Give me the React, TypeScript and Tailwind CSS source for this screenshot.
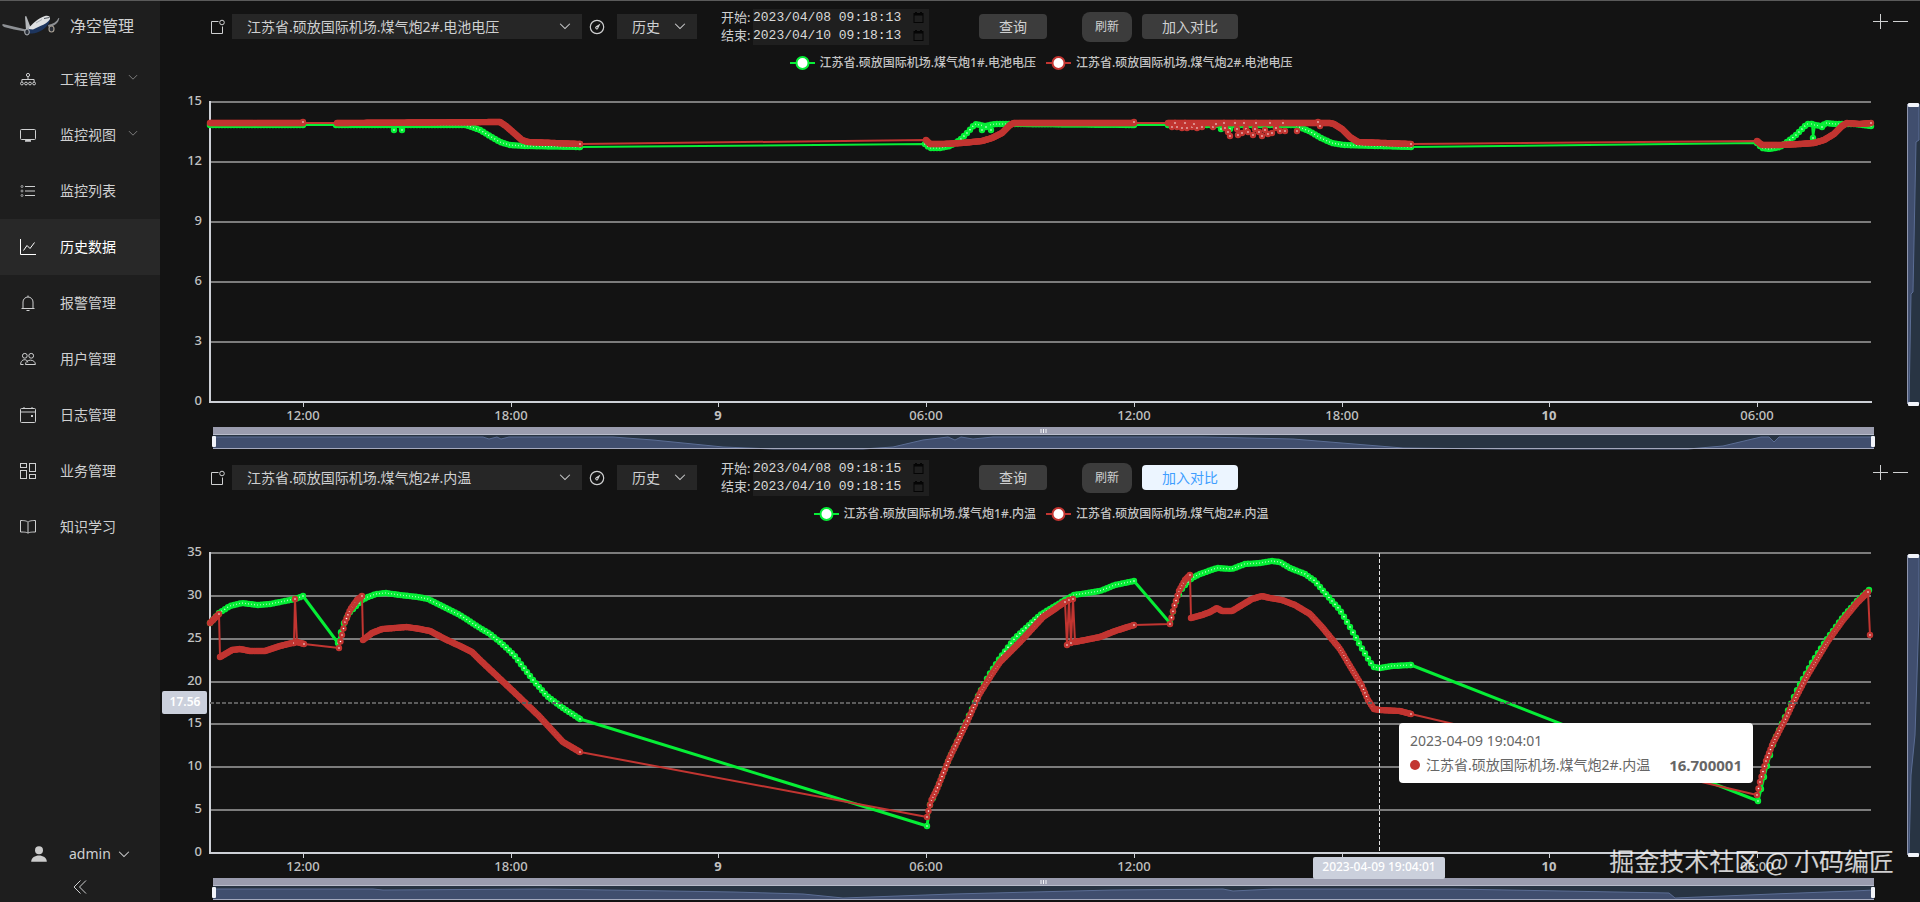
import { useId, useLayoutEffect, useMemo, useRef, useState } from "react";
import type { ReactNode } from "react";

/* ------------------------------------------------------------------ */
/* Trace data, stored in a 1661 x 300 plot space (y grows downwards)   */
/* ------------------------------------------------------------------ */

const SPAN_X = 1661;
const SPAN_Y = 300;

type Pt = [number, number];

interface Series {
  name: string;
  color: string;
  step: number;
  line: number;
  runs: Pt[][];
  scatter?: Pt[];
}

interface ChartData {
  series: Series[];
  max: number;
  interval: number;
  overview: Pt[];
  side: Pt[];
}

const GREEN = "#06ee36";
const RED = "#c23531";

const TICKS: { x: number; label: string; strong?: boolean }[] = [
  { x: 93, label: "12:00" },
  { x: 301, label: "18:00" },
  { x: 508, label: "9", strong: true },
  { x: 716, label: "06:00" },
  { x: 924, label: "12:00" },
  { x: 1132, label: "18:00" },
  { x: 1339, label: "10", strong: true },
  { x: 1547, label: "06:00" },
];

const voltage: ChartData = {
  max: 15,
  interval: 3,
  series: [
    {
      name: "江苏省.硕放国际机场.煤气炮1#.电池电压",
      color: GREEN,
      step: 3,
      line: 2,
      runs: [
        [[0, 23], [93, 23]],
        [
          [126, 23], [255, 23], [262, 25], [270, 28], [280, 34], [290, 40], [300, 43],
          [315, 44], [370, 45],
        ],
        [
          [715, 42], [720, 46], [730, 46], [740, 44], [750, 38], [758, 30], [765, 22],
          [775, 24], [785, 22], [800, 22], [924, 23],
        ],
        [
          [958, 23], [1085, 23], [1092, 26], [1101, 30], [1111, 36], [1122, 41],
          [1134, 43], [1201, 45],
        ],
        [
          [1547, 41], [1552, 46], [1560, 47], [1570, 45], [1577, 40], [1585, 34],
          [1593, 26], [1597, 22], [1602, 22],
        ],
        [[1603, 36]],
        [[1605, 23], [1612, 24], [1616, 21], [1625, 22], [1645, 22], [1661, 24]],
      ],
      scatter: [[184, 28], [192, 28], [772, 28], [781, 28], [776, 25], [1011, 27], [1020, 27], [1612, 25]],
    },
    {
      name: "江苏省.硕放国际机场.煤气炮2#.电池电压",
      color: RED,
      step: 1,
      line: 2,
      runs: [
        [[0, 21], [93, 21]],
        [
          [127, 21], [290, 20], [296, 24], [304, 31], [312, 38], [318, 40], [370, 42],
        ],
        [
          [716, 38], [720, 42], [732, 42], [752, 41], [772, 39], [782, 36], [792, 31],
          [800, 23], [804, 21], [924, 21],
        ],
        [[958, 21], [1000, 21], [1120, 21], [1124, 22], [1132, 27], [1140, 35], [1148, 40], [1201, 42]],
        [
          [1547, 39], [1552, 43], [1570, 43], [1590, 42], [1604, 41], [1614, 38],
          [1624, 32], [1632, 24], [1637, 21], [1650, 22], [1661, 21],
        ],
      ],
      scatter: [
        [962, 25], [967, 25], [972, 26], [977, 26], [982, 25], [987, 26], [992, 25],
        [1003, 25], [1015, 26], [1018, 30], [1020, 34], [1027, 27], [1028, 33], [1032, 31],
        [1036, 27], [1038, 30], [1043, 33], [1045, 27], [1049, 30], [1052, 34], [1055, 28],
        [1058, 32], [1062, 31], [1066, 26], [1070, 29], [1075, 29], [1087, 29], [1110, 24],
        [965, 21], [975, 21], [984, 22], [1006, 22], [1014, 21], [1025, 21], [1034, 21],
        [1046, 21], [1060, 21], [1073, 21], [1108, 20], [93, 20], [370, 42], [924, 20],
      ],
    },
  ],
  overview: [
    [0, 2], [270, 2], [276, 4], [284, 2], [288, 4], [296, 2], [400, 2], [440, 5], [510, 12],
    [560, 14], [650, 14], [680, 12], [710, 5], [735, 2], [742, 5], [748, 2], [760, 4],
    [780, 2], [990, 2], [1080, 4], [1190, 13], [1290, 14], [1475, 14], [1510, 11],
    [1548, 2], [1556, 2], [1561, 7], [1566, 2], [1661, 2],
  ],
  side: [[12, 0], [12, 36], [9, 38], [6, 188], [4, 190], [2, 300]],
};

const temperature: ChartData = {
  max: 35,
  interval: 5,
  series: [
    {
      name: "江苏省.硕放国际机场.煤气炮1#.内温",
      color: GREEN,
      step: 3,
      line: 3,
      runs: [
        [
          [0, 70], [9, 60], [20, 53], [32, 50], [48, 52], [60, 51], [70, 49], [85, 46],
          [93, 43],
        ],
        [
          [128, 90], [133, 72], [140, 59], [152, 47], [158, 44], [166, 41], [176, 40],
          [190, 42], [208, 44], [218, 46], [230, 52], [250, 62], [270, 75], [280, 81],
          [290, 89], [304, 102], [323, 127], [337, 143], [353, 155], [370, 166],
        ],
        [
          [717, 273], [719, 254], [727, 236], [739, 206], [757, 167], [770, 139],
          [779, 122], [790, 105], [805, 85], [830, 62], [855, 47], [864, 42], [890, 38],
          [905, 32], [924, 28],
        ],
        [
          [960, 70], [962, 62], [967, 45], [973, 34], [982, 25], [990, 21], [1007, 15],
          [1022, 16], [1035, 11], [1050, 10], [1062, 8], [1070, 9], [1080, 15],
          [1095, 21], [1105, 28], [1115, 40], [1130, 57], [1140, 74], [1150, 92],
          [1160, 109], [1164, 114], [1170, 115], [1182, 113], [1201, 112],
        ],
        [
          [1548, 248], [1551, 236], [1555, 220], [1564, 188], [1576, 162], [1588, 135],
          [1603, 108], [1615, 89], [1633, 64], [1647, 48], [1659, 37],
        ],
      ],
    },
    {
      name: "江苏省.硕放国际机场.煤气炮2#.内温",
      color: RED,
      step: 1.5,
      line: 2,
      runs: [
        [[0, 70], [9, 61]],
        [
          [10, 104], [22, 97], [30, 96], [40, 98], [55, 98], [70, 93], [82, 90], [84, 90],
        ],
        [[85, 46]],
        [[87, 89], [94, 91]],
        [[129, 95], [132, 82], [135, 69], [140, 57], [147, 47], [152, 43]],
        [
          [153, 87], [162, 80], [172, 76], [185, 75], [197, 74], [210, 76], [220, 78],
          [235, 86], [250, 93], [262, 99], [270, 107], [304, 139], [329, 163], [353, 189],
          [370, 199],
        ],
        [
          [717, 264], [721, 248], [727, 236], [739, 206], [757, 169], [770, 140],
          [782, 121], [790, 109], [810, 89], [833, 64], [855, 49],
        ],
        [[857, 92]],
        [[859, 47]],
        [[861, 90]],
        [[863, 46]],
        [[865, 89], [890, 84], [905, 78], [924, 72]],
        [[960, 71], [964, 54], [969, 38], [975, 27], [980, 22]],
        [
          [981, 65], [992, 62], [1000, 59], [1007, 55], [1012, 58], [1022, 58], [1032, 52],
          [1042, 46], [1052, 43], [1060, 45], [1072, 47], [1085, 52], [1100, 61],
          [1112, 74], [1130, 96], [1140, 113], [1152, 133], [1158, 147], [1164, 156],
          [1170, 157], [1190, 158], [1201, 161],
        ],
        [
          [1547, 242], [1550, 229], [1556, 208], [1563, 190], [1576, 165], [1583, 150],
          [1597, 123], [1618, 88], [1633, 67], [1647, 50], [1658, 39],
        ],
        [[1660, 82]],
      ],
    },
  ],
  overview: [
    [0, 3], [160, 3], [170, 4], [330, 3], [520, 6], [590, 8], [630, 12], [740, 8],
    [900, 4], [1010, 3], [1020, 5], [1060, 3], [1240, 3], [1456, 7], [1462, 12],
    [1560, 8], [1640, 5], [1661, 4],
  ],
  side: [[12, 0], [12, 60], [8, 180], [4, 220], [2, 300]],
};

/* ------------------------------------------------------------------ */
/* Icons                                                               */
/* ------------------------------------------------------------------ */

function Icon({ children, className = "h-4 w-4" }: { children: ReactNode; className?: string }) {
  return (
    <svg viewBox="0 0 16 16" fill="none" stroke="currentColor" strokeWidth="1" className={className} aria-hidden="true">
      {children}
    </svg>
  );
}

const ChevronDown = ({ className = "h-3 w-3" }: { className?: string }) => (
  <Icon className={className}>
    <path d="M1.5 5l6.5 6.5L14.500 5" strokeWidth="1.4" />
  </Icon>
);

const NAV: { label: string; icon: ReactNode; expandable?: boolean; active?: boolean }[] = [
  {
    label: "工程管理",
    expandable: true,
    icon: (
      <Icon>
        <circle cx="8" cy="4" r="1.600" />
        <circle cx="1.900" cy="12.500" r="1.400" />
        <circle cx="6" cy="12.500" r="1.400" />
        <circle cx="10" cy="12.500" r="1.400" />
        <circle cx="14.100" cy="12.500" r="1.400" />
        <path d="M8 5.500V8.500M1.900 11V8.500H14.100V11" />
      </Icon>
    ),
  },
  {
    label: "监控视图",
    expandable: true,
    icon: (
      <Icon>
        <rect x="0.500" y="2.500" width="15" height="10" rx="1" />
        <path d="M5.500 13.500H10.500M5 14H11" strokeWidth="1.400" />
      </Icon>
    ),
  },
  {
    label: "监控列表",
    icon: (
      <Icon>
        <path d="M5 3.500H15M5 8H15M5 12.500H15" />
        <circle cx="2" cy="3.500" r="1" strokeWidth="0.700" />
        <circle cx="2" cy="8" r="1" strokeWidth="0.700" />
        <circle cx="2" cy="12.500" r="1" strokeWidth="0.700" />
      </Icon>
    ),
  },
  {
    label: "历史数据",
    active: true,
    icon: (
      <Icon>
        <path d="M0.500 0V15.500H16" />
        <path d="M3.500 11.500L7 6.500L10 9.500L14.500 3.500" />
      </Icon>
    ),
  },
  {
    label: "报警管理",
    icon: (
      <Icon>
        <path d="M1.500 13.500H14.500M3 13.500V7a5 5 0 0 1 10 0v6.500M8 2V0.500M6.500 15.500H9.500" />
      </Icon>
    ),
  },
  {
    label: "用户管理",
    icon: (
      <Icon>
        <circle cx="4.800" cy="4.800" r="2.400" />
        <circle cx="11.200" cy="4.800" r="2.400" />
        <path d="M0.600 13.500C0.600 7.500 7.500 7.500 7.800 11.500M3.500 13.500H0.600M5.500 13.500C5.500 7.700 15.400 7.700 15.400 13.500H5.500" />
      </Icon>
    ),
  },
  {
    label: "日志管理",
    icon: (
      <Icon>
        <rect x="0.500" y="1.500" width="15" height="14" rx="1" />
        <path d="M0.500 5H15.500M4 0V2M12 0V2" />
        <rect x="11" y="8" width="2" height="2" fill="currentColor" stroke="none" />
      </Icon>
    ),
  },
  {
    label: "业务管理",
    icon: (
      <Icon>
        <rect x="0.500" y="0.500" width="6" height="4" />
        <rect x="0.500" y="7.500" width="6" height="8" />
        <rect x="9.500" y="0.500" width="6" height="8" />
        <rect x="9.500" y="11.500" width="6" height="4" />
      </Icon>
    ),
  },
  {
    label: "知识学习",
    icon: (
      <Icon>
        <path d="M8 3.200C7 2.200 5.500 1.500 0.500 1.500V13C5 13 7 13.300 8 14.200C9 13.300 11 13 15.500 13V1.500C10.500 1.500 9 2.200 8 3.200V14.200" />
      </Icon>
    ),
  },
];

function PlaneLogo() {
  return (
    <svg viewBox="0 0 58 22" className="h-[22px] w-[58px]" aria-hidden="true">
      <path d="M0 10L1 9L24 14.500L26 17L12 14.500L2 12Z" fill="#8d9094" />
      <path d="M24 15L23 1.500L24.200 1L28.500 12Z" fill="#b5b8bb" />
      <path d="M24 18C30 19.500 38 18 44 12C47 9 48.500 5.500 47.500 3L38 8L26 14Z" fill="#1d355e" />
      <path d="M26 14C30 9 36 3 43 1C46.500 0.300 48.500 1.500 48 4C46 8.500 38 11 31 14.500Z" fill="#dfe1e3" />
      <path d="M42 3.500L47.500 2.500" stroke="#4a5058" strokeWidth="1" />
      <path d="M34 8L40 4.500" stroke="#9ba0a6" strokeWidth="0.800" />
      <path d="M46 10C51 9 54.500 7 56.500 3L57.300 3C56.500 8 53 11 46.500 12Z" fill="#8d9094" />
      <ellipse cx="25" cy="17" rx="2.300" ry="3" fill="#2a2f38" stroke="#b9bcbf" strokeWidth="1" />
      <ellipse cx="49.500" cy="14" rx="2.500" ry="3" fill="#2a2f38" stroke="#a59d92" strokeWidth="1.200" />
    </svg>
  );
}

/* ------------------------------------------------------------------ */
/* Sidebar                                                             */
/* ------------------------------------------------------------------ */

function Sidebar() {
  return (
    <aside className="flex w-40 shrink-0 flex-col border-t border-[#5a5a5a] bg-[#1e1e1e] text-sm text-[#cfd0d1]">
      <div className="flex h-[50px] items-center gap-2.5 pl-0.5">
        <PlaneLogo />
        <h1 className="text-base">净空管理</h1>
      </div>
      <nav className="flex flex-col">
        {NAV.map((item) => (
          <a
            key={item.label}
            href="#"
            className={
              item.active
                ? "flex h-14 items-center bg-[#282828] pl-5 text-white"
                : "flex h-14 items-center pl-5"
            }
          >
            {item.icon}
            <span className="ml-6">{item.label}</span>
            {item.expandable && <ChevronDown className="mb-1 ml-3 h-2.5 w-2.5 text-[#8a8a8a]" />}
          </a>
        ))}
      </nav>
      <div className="mt-auto flex flex-col">
        <button type="button" className="flex h-9 items-center pl-[31px]">
          <svg viewBox="0 0 16 16" className="h-4 w-4" fill="#cccccc" aria-hidden="true">
            <circle cx="8" cy="4.200" r="4" />
            <path d="M0.200 15.800C0.200 7.500 15.800 7.500 15.800 15.800Z" />
          </svg>
          <span className="ml-[22px]">admin</span>
          <ChevronDown className="ml-[7px] h-3 w-3" />
        </button>
        <button type="button" aria-label="收起菜单" className="flex h-[30px] items-center justify-center">
          <Icon className="h-4 w-4">
            <path d="M8.500 1.500L2 8L8.500 14.500M14 1.500L7.500 8L14 14.500" />
          </Icon>
        </button>
      </div>
    </aside>
  );
}

/* ------------------------------------------------------------------ */
/* Toolbar                                                             */
/* ------------------------------------------------------------------ */

function Picker({ label, value, wide }: { label: string; value: string; wide?: boolean }) {
  return (
    <div className={wide ? "relative w-[350px]" : "relative w-20"}>
      <select
        aria-label={label}
        defaultValue={value}
        className="block h-[25px] w-full appearance-none bg-[#262626] pl-[15px] text-sm leading-6 text-[#cfd0d1] outline-none"
      >
        <option>{value}</option>
      </select>
      <ChevronDown className="pointer-events-none absolute right-[11px] top-1.5 h-3 w-3 text-[#cfd0d1]" />
    </div>
  );
}

function DateField({ label, value }: { label: string; value: string }) {
  const id = useId();
  return (
    <div className="flex h-[18px] items-center">
      <label htmlFor={id} className="w-8 whitespace-nowrap text-[13px] leading-none text-[#cfd0d1]">
        {label}
      </label>
      <div className="flex h-full items-center bg-[#1f1f1f]">
        <input
          id={id}
          type="text"
          defaultValue={value}
          className="w-40 bg-transparent font-['Liberation_Mono',monospace] text-[13px] leading-none text-[#dadada] outline-none"
        />
        <svg viewBox="0 0 12 12" className="mr-1 h-3 w-3" fill="none" stroke="#050505" aria-hidden="true">
          <rect x="1" y="1.500" width="9" height="9" />
          <path d="M1 2.500H10M3 0V2M8 0V2" strokeWidth="2" />
        </svg>
      </div>
    </div>
  );
}

interface PanelProps {
  point: string;
  start: string;
  end: string;
  data: ChartData;
  compareHot?: boolean;
  hover?: boolean;
  topmost?: boolean;
}

function Toolbar({ point, start, end, compareHot, topmost }: PanelProps) {
  return (
    <div
      className={
        topmost
          ? "flex h-[52px] shrink-0 items-center border-t border-[#5a5a5a] pl-[50px] text-[#cfd0d1]"
          : "flex h-[52px] shrink-0 items-center border-t border-transparent pl-[50px] text-[#cfd0d1]"
      }
    >
      <Icon>
        <path d="M8.500 2.500H1.500V14.500H12.500V7.500" />
        <circle cx="12" cy="3.500" r="2.300" />
      </Icon>
      <div className="ml-1.5">
        <Picker label="监测点" value={point} wide />
      </div>
      <Icon className="ml-[7px] h-4 w-4">
        <circle cx="8" cy="8" r="6.700" strokeWidth="1.200" />
        <path d="M11.500 4.500L9.300 9.300A1.600 1.600 0 1 1 7 7.300Z" fill="currentColor" stroke="none" />
        <circle cx="7.900" cy="8.700" r="0.600" fill="#131313" stroke="none" />
      </Icon>
      <div className="ml-3">
        <Picker label="数据类型" value="历史" />
      </div>
      <div className="ml-6 flex flex-col">
        <DateField label="开始:" value={start} />
        <DateField label="结束:" value={end} />
      </div>
      <button type="button" className="ml-[50px] h-[25px] w-[68px] rounded bg-[#3c3c3c] text-sm leading-none">
        查询
      </button>
      <button type="button" className="ml-[35px] h-[30px] w-[50px] rounded-lg bg-[#3c3c3c] text-xs leading-none">
        刷新
      </button>
      <button
        type="button"
        className={
          compareHot
            ? "ml-2.5 h-[25px] w-24 rounded bg-[#ecf5ff] text-sm leading-none text-[#409eff]"
            : "ml-2.5 h-[25px] w-24 rounded bg-[#3c3c3c] text-sm leading-none"
        }
      >
        加入对比
      </button>
      <div className="mb-3 ml-auto mr-3 flex gap-1">
        <button type="button" aria-label="新增图表">
          <Icon>
            <path d="M8.500 1V16M1 8.500H16" />
          </Icon>
        </button>
        <button type="button" aria-label="移除图表">
          <Icon>
            <path d="M1 8.500H16" />
          </Icon>
        </button>
      </div>
    </div>
  );
}

/* ------------------------------------------------------------------ */
/* Chart                                                               */
/* ------------------------------------------------------------------ */

const PAD = { left: 50, right: 49, top: 50, bottom: 49 };

function sampleRun(run: Pt[], step: number): Pt[] {
  if (run.length === 1) return run;
  const out: Pt[] = [];
  let seg = 0;
  const last = run[run.length - 1];
  for (let x = run[0][0]; x < last[0]; x += step) {
    while (x > run[seg + 1][0]) seg += 1;
    const [x0, y0] = run[seg];
    const [x1, y1] = run[seg + 1];
    out.push([x, y0 + ((y1 - y0) * (x - x0)) / (x1 - x0)]);
  }
  out.push(last);
  return out;
}

function useSize() {
  const ref = useRef<HTMLDivElement>(null);
  const [size, setSize] = useState({ w: 1760, h: 399 });
  useLayoutEffect(() => {
    const el = ref.current;
    if (!el) return;
    const read = () => setSize({ w: el.clientWidth, h: el.clientHeight });
    read();
    const ro = new ResizeObserver(read);
    ro.observe(el);
    return () => ro.disconnect();
  }, []);
  return { ref, ...size };
}

function Legend({ series }: { series: Series[] }) {
  return (
    <ul className="relative flex justify-center gap-2.5 pl-0.5 pt-px text-xs font-medium leading-5 text-[#c4c4c4]">
      {series.map((s) => (
        <li key={s.name} className="flex items-center gap-[5px]">
          <svg viewBox="0 0 25 14" className="h-3.5 w-[25px]" aria-hidden="true">
            <path d="M0 7H25" stroke={s.color} strokeWidth="2" />
            <circle cx="12.500" cy="7" r="6" fill="#fff" stroke={s.color} strokeWidth="2" />
          </svg>
          {s.name}
        </li>
      ))}
    </ul>
  );
}

function Chart({ data, hover }: { data: ChartData; hover?: boolean }) {
  const { ref, w, h } = useSize();
  const plotW = w - PAD.left - PAD.right;
  const plotH = h - PAD.top - PAD.bottom;
  const px = (x: number) => PAD.left + (x / SPAN_X) * plotW;
  const py = (y: number) => PAD.top + (y / SPAN_Y) * plotH;
  const bottom = PAD.top + plotH;

  const sampled = useMemo(
    () => data.series.map((s) => ({ ...s, dots: s.runs.map((r) => sampleRun(r, s.step)) })),
    [data],
  );

  const rows: number[] = [];
  for (let v = 0; v <= data.max; v += data.interval) rows.push(v);

  const zoomX = PAD.left + 3;
  const zoomY = bottom + 25;
  const sideX = w - 13;
  const sideY = PAD.top + 2;
  const overview = data.overview
    .map(([x, y]) => `${zoomX + (x / SPAN_X) * plotW},${zoomY + 8 + y}`)
    .join(" ");
  const side = data.side.map(([x, y]) => `${sideX + x},${sideY + (y / SPAN_Y) * plotH}`).join(" ");
  const hoverX = px(1170);
  const hoverY = py(150);

  return (
    <div ref={ref} className="relative min-h-0 flex-1 overflow-hidden">
      <svg width={w} height={h} className="absolute inset-0 font-['Noto_Sans',sans-serif]">
        {rows.map((v) => {
          const y = Math.round(bottom - (v / data.max) * plotH);
          return (
            <g key={v}>
              {v > 0 && (
                <rect x={PAD.left} y={y - 1} width={plotW} height={2} fill="#7c7c7c" />
              )}
              <text x={PAD.left - 8} y={y + 3} textAnchor="end" fontSize="13" fontWeight="500" fill="#c2c2c2">
                {v}
              </text>
            </g>
          );
        })}
        <rect x={PAD.left - 1} y={PAD.top - 1} width={2} height={plotH + 2} fill="#cdd0d6" />
        <rect x={PAD.left - 1} y={bottom - 1} width={plotW + 2} height={2} fill="#cdd0d6" />
        {TICKS.map((t) => {
          const covered = hover && Math.abs(px(t.x) - hoverX) < 67;
          return (
            <g key={t.x}>
              <rect x={Math.round(px(t.x))} y={bottom} width={1} height={5} fill="#cdd0d6" />
              {!covered && (
                <text
                  x={px(t.x)}
                  y={bottom + 18}
                  textAnchor="middle"
                  fontSize="13"
                  fontWeight={t.strong ? 700 : 500}
                  fill="#c2c2c2"
                >
                  {t.label}
                </text>
              )}
            </g>
          );
        })}

        {sampled.map((s) => (
          <g key={s.name}>
            <polyline
              points={s.dots.flat().map(([x, y]) => `${px(x)},${py(y)}`).join(" ")}
              fill="none"
              stroke={s.color}
              strokeWidth={s.line}
              strokeLinejoin="round"
            />
            {[...s.dots.flat(), ...(s.scatter ?? [])].map(([x, y], i) => (
              <circle key={i} cx={px(x)} cy={py(y)} r="2" fill="#fff" stroke={s.color} strokeWidth="2.400" />
            ))}
          </g>
        ))}

        <g>
          <rect x={zoomX} y={zoomY} width={plotW} height={8} fill="#9a9cae" />
          <rect x={zoomX} y={zoomY + 8} width={plotW} height={13} fill="#283443" />
          <polygon
            points={`${zoomX},${zoomY + 21} ${overview} ${zoomX + plotW},${zoomY + 21}`}
            fill="#404e6e"
          />
          <polyline points={overview} fill="none" stroke="#5b6d94" strokeWidth="1" />
          <rect x={zoomX} y={zoomY + 7} width={plotW} height={1} fill="#b9bccb" />
          <rect x={zoomX} y={zoomY + 21} width={plotW} height={1} fill="#a3a8bd" />
          <path
            d={`M${zoomX + plotW / 2 - 2.500} ${zoomY + 2}v4m2.500 -4v4m2.500 -4v4`}
            stroke="#f4f5f8"
            strokeWidth="1"
          />
          <rect x={zoomX - 1} y={zoomY + 9} width={4} height={11} rx="1" fill="#f2f4fa" />
          <rect x={zoomX + plotW - 3} y={zoomY + 9} width={4} height={11} rx="1" fill="#f2f4fa" />
        </g>

        <g>
          <rect x={sideX} y={sideY} width={20} height={plotH} fill="#283443" />
          <polygon
            points={`${sideX},${sideY} ${side} ${sideX},${sideY + plotH}`}
            fill="#404e6e"
          />
          <polyline points={side} fill="none" stroke="#5b6d94" strokeWidth="1" />
          <rect x={sideX} y={sideY} width={1} height={plotH} fill="#8f96ae" />
          <rect x={sideX + 1} y={sideY - 1} width={11} height={4} rx="1" fill="#f2f4fa" />
          <rect x={sideX + 1} y={sideY + plotH - 2} width={11} height={4} rx="1" fill="#f2f4fa" />
        </g>

        {hover && (
          <g>
            <path d={`M${PAD.left} ${Math.round(hoverY)}H${px(SPAN_X)}`} stroke="#5c5c5c" strokeWidth="2" strokeDasharray="4 2" />
            <path d={`M${Math.round(hoverX) - 0.500} ${PAD.top}V${bottom}`} stroke="#e2e2e2" strokeDasharray="4 2" />
            <rect x={2} y={hoverY - 12} width={45} height={23} rx="2" fill="#cbd0dc" />
            <text x={25} y={hoverY + 3} textAnchor="middle" fontSize="12" fontWeight="600" fill="#fff">
              17.56
            </text>
            <rect x={hoverX - 67} y={bottom + 4} width={132} height={22} rx="2" fill="#cbd0dc" />
            <text x={hoverX - 1} y={bottom + 18} textAnchor="middle" fontSize="12" fontWeight="500" fill="#fff">
              2023-04-09 19:04:01
            </text>
          </g>
        )}
      </svg>
      <Legend series={data.series} />
      {hover && (
        <div
          className="absolute flex w-[354px] flex-col gap-1 rounded bg-white px-[11px] py-2 text-sm leading-5 text-[#666]"
          style={{ left: hoverX + 19, top: hoverY + 20 }}
        >
          <div>2023-04-09 19:04:01</div>
          <div className="flex items-center">
            <span className="mr-1.5 h-2.5 w-2.5 rounded-full bg-[#c23531]" />
            <span>{data.series[1].name}</span>
            <strong className="ml-auto text-[15px] font-bold leading-5">16.700001</strong>
          </div>
        </div>
      )}
    </div>
  );
}

function Panel(props: PanelProps) {
  return (
    <section className="flex min-h-0 flex-1 flex-col">
      <Toolbar {...props} />
      <Chart data={props.data} hover={props.hover} />
    </section>
  );
}

export default function App() {
  return (
    <div className="relative flex h-screen overflow-hidden bg-[#131313] font-['Noto_Sans','Noto_Sans_CJK_SC',sans-serif]">
      <Sidebar />
      <main className="flex min-w-0 flex-1 flex-col">
        <Panel
          topmost
          point="江苏省.硕放国际机场.煤气炮2#.电池电压"
          start="2023/04/08 09:18:13"
          end="2023/04/10 09:18:13"
          data={voltage}
        />
        <Panel
          point="江苏省.硕放国际机场.煤气炮2#.内温"
          start="2023/04/08 09:18:15"
          end="2023/04/10 09:18:15"
          data={temperature}
          compareHot
          hover
        />
      </main>
      <div className="pointer-events-none absolute bottom-6 right-[26px] font-['Noto_Sans_CJK_SC',sans-serif] text-[25px] leading-9 text-white/80">
        掘金技术社区 @ 小码编匠
      </div>
    </div>
  );
}
